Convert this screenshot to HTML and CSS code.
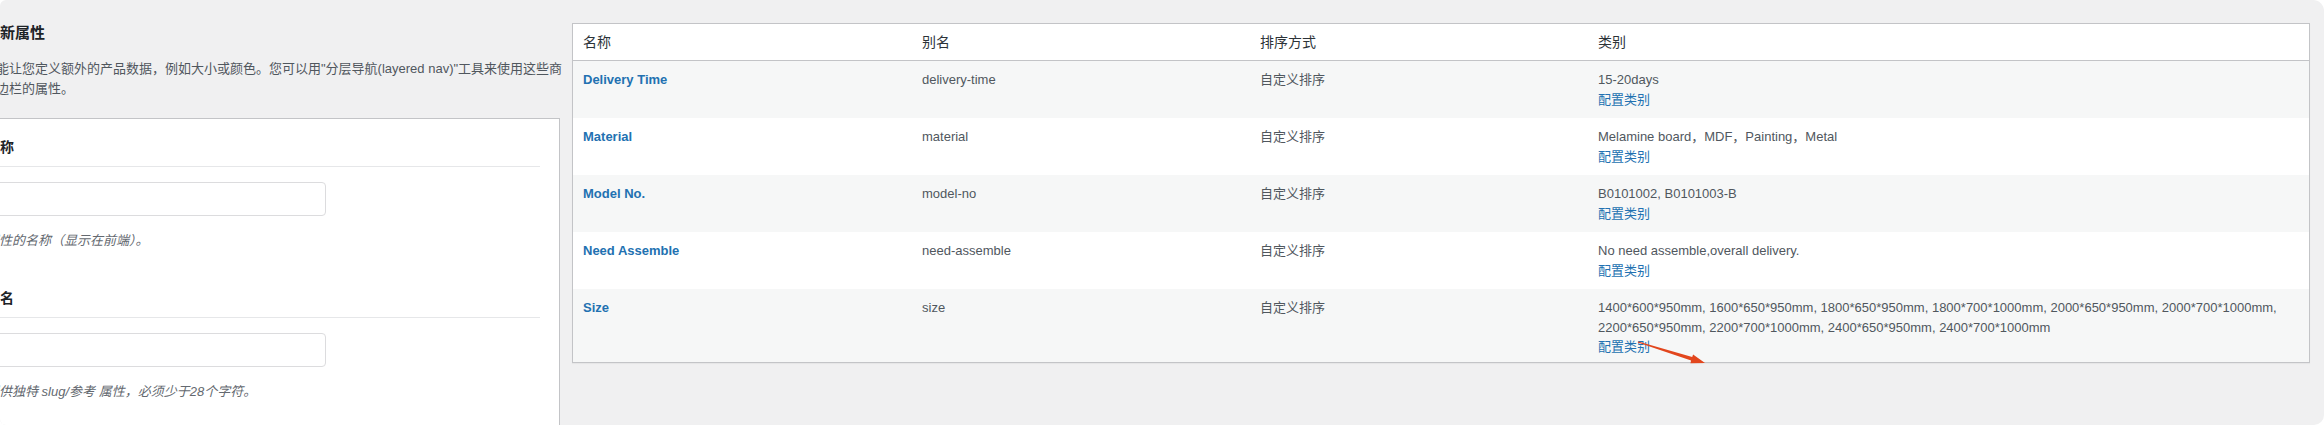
FILE: index.html
```html
<!DOCTYPE html>
<html lang="zh-CN">
<head>
<meta charset="UTF-8">
<title>属性</title>
<link rel="stylesheet" href="styles.css">
</head>
<body>

<div class="panel">

  <div class="col-left">
    <h2>添加新属性</h2>
    <p class="intro">属性能让您定义额外的产品数据，例如大小或颜色。您可以用"分层导航(layered nav)"工具来使用这些商店侧边栏的属性。</p>

    <div class="form-box">
      <div class="field">
        <label for="attr-name">名称</label>
        <input type="text" id="attr-name">
        <p class="description">属性的名称（显示在前端）。</p>
      </div>
      <div class="field">
        <label for="attr-slug">别名</label>
        <input type="text" id="attr-slug">
        <p class="description">提供独特 slug/参考 属性，必须少于28个字符。</p>
      </div>
    </div>
  </div>

  <div class="col-right">
    <table class="attrs">
      <colgroup>
        <col class="c-name">
        <col class="c-slug">
        <col class="c-order">
        <col>
      </colgroup>
      <thead>
        <tr>
          <th>名称</th>
          <th>别名</th>
          <th>排序方式</th>
          <th>类别</th>
        </tr>
      </thead>
      <tbody>
        <tr>
          <td><a class="name" href="#">Delivery Time</a></td>
          <td>delivery-time</td>
          <td>自定义排序</td>
          <td>15-20days<br><a href="#">配置类别</a></td>
        </tr>
        <tr>
          <td><a class="name" href="#">Material</a></td>
          <td>material</td>
          <td>自定义排序</td>
          <td>Melamine board，MDF，Painting，Metal<br><a href="#">配置类别</a></td>
        </tr>
        <tr>
          <td><a class="name" href="#">Model No.</a></td>
          <td>model-no</td>
          <td>自定义排序</td>
          <td>B0101002, B0101003-B<br><a href="#">配置类别</a></td>
        </tr>
        <tr>
          <td><a class="name" href="#">Need Assemble</a></td>
          <td>need-assemble</td>
          <td>自定义排序</td>
          <td>No need assemble,overall delivery.<br><a href="#">配置类别</a></td>
        </tr>
        <tr>
          <td><a class="name" href="#">Size</a></td>
          <td>size</td>
          <td>自定义排序</td>
          <td>1400*600*950mm, 1600*650*950mm, 1800*650*950mm, 1800*700*1000mm, 2000*650*950mm, 2000*700*1000mm, 2200*650*950mm, 2200*700*1000mm, 2400*650*950mm, 2400*700*1000mm<br><a href="#">配置类别</a></td>
        </tr>
      </tbody>
    </table>
  </div>

  <!-- annotation arrow -->
  <svg class="arrow" width="85" height="35" viewBox="0 0 85 35">
    <polygon points="8.2,6.5 62.2,22.1 63.1,19.5 75,28 60.4,28.2 61.1,25.5 7.8,7.5" fill="#e2461d"/>
  </svg>

</div>

</body>
</html>
```

FILE: styles.css
```css
body {
  margin: 0;
  background: #fff;
  font-family: "Liberation Sans", "Noto Sans CJK SC", sans-serif;
  font-size: 13px;
  color: #3c434a;
}

.panel {
  position: relative;
  display: flex;
  gap: 12px;
  height: 425px;
  box-sizing: border-box;
  padding: 23px 14px 0 0;
  background: #f0f0f1;
  border-radius: 6px 11px 10px 6px;
  overflow: hidden;
}

/* left column, partly cut off */
.col-left {
  flex: none;
  width: 590px;
  margin-left: -30px;
  display: flex;
  flex-direction: column;
}

h2 {
  margin: 0;
  font-size: 15px;
  line-height: 20px;
  color: #1d2327;
}

.intro {
  margin: 16px -12px 19px 0;
  line-height: 20px;
  color: #50575e;
}

.form-box {
  flex: 1;
  background: #fff;
  border: 1px solid #c3c4c7;
  border-bottom: none;
  padding: 17px 19px 0 15px;
}

.field + .field {
  margin-top: 36px;
}

.field label {
  display: block;
  font-size: 14px;
  font-weight: bold;
  line-height: 22px;
  padding-bottom: 8px;
  border-bottom: 1px solid #e6e7e9;
  color: #1d2327;
}

.field input {
  display: block;
  width: 340px;
  height: 34px;
  box-sizing: border-box;
  margin-top: 15px;
  border: 1px solid #dcdcde;
  border-radius: 4px;
  background: #fff;
}

.description {
  margin: 15px 0 0;
  font-style: italic;
  line-height: 20px;
  color: #646970;
}

/* attribute table */
.col-right {
  flex: 1;
}

.attrs {
  width: 100%;
  table-layout: fixed;
  border-spacing: 0;
  border: 1px solid #c3c4c7;
  background: #fff;
  box-shadow: 0 1px 1px rgba(0, 0, 0, .04);
}

.c-name { width: 339px; }
.c-slug,
.c-order { width: 338px; }

.attrs th {
  text-align: left;
  font-size: 14px;
  font-weight: normal;
  line-height: 20px;
  padding: 8px 10px;
  color: #2c3338;
  border-bottom: 1px solid #c3c4c7;
}

.attrs tbody tr {
  height: 57px;
}

.attrs tbody tr:nth-child(odd) {
  background: #f6f7f7;
}

.attrs td {
  vertical-align: top;
  padding: 9px 10px 5px;
  line-height: 19.5px;
  color: #50575e;
}

.attrs a {
  color: #2271b1;
  text-decoration: none;
}

.attrs a.name {
  font-weight: bold;
}

.arrow {
  position: absolute;
  left: 1630px;
  top: 335px;
}
```
